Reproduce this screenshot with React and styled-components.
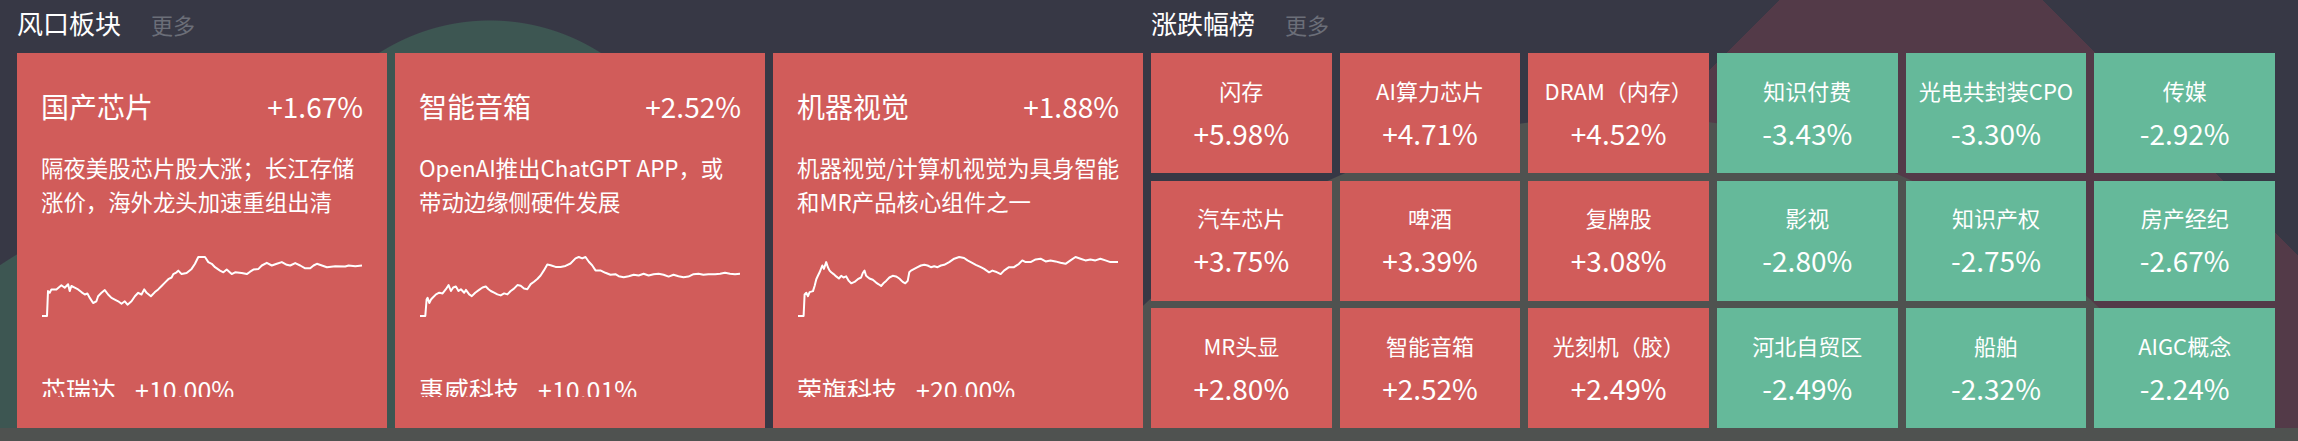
import React from "react";
import styled, { createGlobalStyle } from "styled-components";

const GlobalStyle = createGlobalStyle`
  html, body {
    margin: 0;
    padding: 0;
    background: #373845;
  }
  body {
    font-family: "Noto Sans CJK SC", "Noto Sans", sans-serif;
    color: #fff;
  }
`;

const RED = "#d15c5a";
const GREEN = "#65b99a";

const Page = styled.div`
  box-sizing: border-box;
  width: 2298px;
  height: 441px;
  padding: 0 23px 0 17px;
  display: flex;
  gap: 8px;
  overflow: hidden;
  background:
    linear-gradient(to bottom, transparent 428px, #4f5250 428px),
    radial-gradient(695px circle at 1620px 812px, #4f5250 695px, transparent 696px),
    radial-gradient(205px circle at 490px 226px, #3d5652 205px, transparent 206px),
    radial-gradient(450px circle at 250px 640px, #3d5652 450px, transparent 451px),
    conic-gradient(from 0deg at 1911px -131px, transparent 135deg, #533a48 135deg 225deg, transparent 225deg),
    #373845;
`;

const Section = styled.section`
  flex: 1;
  display: flex;
  flex-direction: column;
`;

const SectionHeader = styled.div`
  box-sizing: border-box;
  height: 53px;
  padding-top: 5px;
  display: flex;
  align-items: baseline;
  gap: 30px;
`;

const SectionTitle = styled.h2`
  margin: 0;
  font-size: 26px;
  line-height: 36px;
  font-weight: 400;
  color: #fff;
`;

const More = styled.span`
  font-size: 22px;
  color: #6b6e78;
`;

const CardGrid = styled.div`
  display: grid;
  grid-template-columns: repeat(3, 1fr);
  gap: 8px;
  height: 375px;
`;

const Card = styled.div`
  background: ${RED};
  padding: 0 24px;
`;

const CardClip = styled.div`
  box-sizing: border-box;
  height: 344px;
  padding-top: 36px;
  overflow: hidden;
  display: flex;
  flex-direction: column;

  & > * {
    flex-shrink: 0;
  }
`;

const CardHead = styled.div`
  display: flex;
  justify-content: space-between;
  font-size: 28px;
  line-height: 34px;
`;

const CardDesc = styled.p`
  margin: 27px -2px 0 0;
  font-size: 22.4px;
  line-height: 34px;
  height: 68px;
`;

const Chart = styled.svg`
  display: block;
  margin-top: 36px;
  width: 322px;
  height: 64px;
`;

const StockRow = styled.div`
  margin-top: 59px;
  display: flex;
  gap: 19px;
  font-size: 25px;
  line-height: 25px;
  white-space: nowrap;
`;

const TileGrid = styled.div`
  display: grid;
  grid-template-columns: repeat(6, 1fr);
  grid-template-rows: repeat(3, 120px);
  column-gap: 8px;
  row-gap: 7.5px;
`;

const Tile = styled.div`
  background: ${(p) => (p.$down ? GREEN : RED)};
  display: flex;
  flex-direction: column;
  align-items: center;
  justify-content: center;
  gap: 7px;
  white-space: nowrap;
`;

const TileName = styled.div`
  font-size: 22px;
  line-height: 32px;
`;

const TileValue = styled.div`
  font-size: 28px;
  line-height: 40px;
`;

// raw points traced from the chart, normalised when drawn
const series = {
  chip: [
    [122, 948], [137, 948], [140, 875], [145, 880], [150, 870], [165, 870], [180, 858], [190, 865],
    [200, 855], [205, 875], [210, 860], [220, 865], [230, 870], [240, 878], [250, 885], [258, 882],
    [265, 895], [275, 910], [285, 905], [290, 890], [300, 880], [310, 872], [320, 885], [330, 895],
    [340, 900], [350, 905], [360, 912], [370, 905], [378, 915], [390, 905], [400, 890], [410, 880],
    [420, 885], [428, 870], [435, 880], [448, 890], [460, 878], [470, 870], [480, 860], [490, 850],
    [500, 840], [510, 835], [515, 825], [525, 820], [530, 815], [540, 825], [555, 822], [570, 810],
    [580, 795], [590, 775], [610, 775], [620, 790], [630, 795], [640, 805], [655, 815], [665, 820],
    [675, 812], [690, 825], [700, 820], [720, 822], [735, 825], [745, 818], [755, 812], [770, 810],
    [780, 800], [795, 792], [810, 800], [825, 795], [840, 790], [855, 798], [865, 800], [880, 793],
    [895, 800], [910, 808], [925, 808], [935, 800], [945, 795], [960, 800], [975, 805], [1000, 802],
    [1030, 803], [1040, 800], [1060, 802], [1080, 800],
  ],
  speaker: [
    [112, 948], [128, 948], [132, 900], [135, 895], [140, 910], [145, 900], [150, 895], [160, 885],
    [170, 880], [180, 882], [190, 870], [198, 858], [205, 875], [212, 865], [220, 862], [228, 875],
    [235, 870], [245, 880], [250, 872], [260, 885], [268, 890], [278, 880], [290, 872], [300, 865],
    [310, 862], [318, 870], [325, 875], [335, 880], [345, 885], [355, 888], [365, 882], [375, 885],
    [385, 875], [395, 868], [405, 858], [415, 860], [425, 868], [435, 870], [445, 855], [455, 848],
    [465, 840], [475, 830], [485, 815], [495, 798], [505, 800], [520, 805], [535, 805], [550, 802],
    [565, 795], [580, 780], [590, 776], [600, 780], [610, 776], [620, 790], [630, 800], [640, 815],
    [655, 815], [670, 822], [685, 828], [700, 826], [710, 832], [725, 835], [740, 832], [755, 828],
    [770, 830], [785, 825], [800, 830], [815, 826], [830, 825], [845, 828], [860, 833], [875, 828],
    [890, 832], [905, 835], [920, 833], [935, 826], [950, 825], [965, 828], [980, 826], [1000, 826],
    [1015, 825], [1030, 822], [1045, 825], [1060, 826], [1075, 825],
  ],
  vision: [
    [105, 948], [122, 948], [125, 885], [130, 880], [135, 890], [140, 878], [150, 875], [155, 860],
    [160, 840], [165, 830], [170, 820], [178, 800], [183, 810], [190, 790], [195, 805], [200, 815],
    [205, 820], [212, 825], [220, 832], [228, 838], [235, 830], [242, 835], [250, 832], [258, 845],
    [265, 852], [275, 848], [285, 840], [295, 835], [300, 822], [305, 815], [310, 830], [320, 838],
    [330, 842], [340, 850], [348, 855], [355, 860], [362, 852], [370, 845], [380, 835], [390, 830],
    [400, 832], [410, 838], [420, 848], [428, 852], [435, 845], [440, 820], [445, 815], [455, 810],
    [465, 805], [475, 800], [485, 798], [495, 800], [505, 805], [515, 802], [525, 805], [535, 800],
    [545, 798], [560, 790], [575, 780], [590, 775], [605, 778], [615, 785], [625, 790], [640, 798],
    [655, 805], [665, 810], [680, 820], [690, 815], [700, 818], [715, 825], [725, 815], [740, 805],
    [755, 805], [770, 795], [780, 785], [790, 790], [805, 790], [820, 782], [835, 780], [850, 788],
    [865, 785], [880, 788], [895, 792], [910, 795], [925, 785], [940, 775], [955, 780], [970, 785],
    [985, 782], [1000, 785], [1015, 780], [1030, 785], [1045, 790], [1068, 790],
  ],
};

const toPoints = (pts) => {
  const xs = pts.map((p) => p[0]);
  const ys = pts.map((p) => p[1]);
  const x0 = Math.min(...xs);
  const x1 = Math.max(...xs);
  const y0 = Math.min(...ys);
  const y1 = Math.max(...ys);
  return pts
    .map(([x, y]) => {
      const px = 1 + ((x - x0) / (x1 - x0)) * 320;
      const py = 3 + ((y - y0) / (y1 - y0)) * 59;
      return `${px.toFixed(1)},${py.toFixed(1)}`;
    })
    .join(" ");
};

const hotCards = [
  {
    name: "国产芯片",
    pct: "+1.67%",
    desc: "隔夜美股芯片股大涨；长江存储涨价，海外龙头加速重组出清",
    line: series.chip,
    stock: "芯瑞达",
    stockPct: "+10.00%",
  },
  {
    name: "智能音箱",
    pct: "+2.52%",
    desc: "OpenAI推出ChatGPT APP，或带动边缘侧硬件发展",
    line: series.speaker,
    stock: "惠威科技",
    stockPct: "+10.01%",
  },
  {
    name: "机器视觉",
    pct: "+1.88%",
    desc: "机器视觉/计算机视觉为具身智能和MR产品核心组件之一",
    line: series.vision,
    stock: "荣旗科技",
    stockPct: "+20.00%",
  },
];

const movers = [
  ["闪存", "+5.98%"], ["AI算力芯片", "+4.71%"], ["DRAM（内存）", "+4.52%"],
  ["知识付费", "-3.43%"], ["光电共封装CPO", "-3.30%"], ["传媒", "-2.92%"],
  ["汽车芯片", "+3.75%"], ["啤酒", "+3.39%"], ["复牌股", "+3.08%"],
  ["影视", "-2.80%"], ["知识产权", "-2.75%"], ["房产经纪", "-2.67%"],
  ["MR头显", "+2.80%"], ["智能音箱", "+2.52%"], ["光刻机（胶）", "+2.49%"],
  ["河北自贸区", "-2.49%"], ["船舶", "-2.32%"], ["AIGC概念", "-2.24%"],
];

const HotCard = ({ card }) => (
  <Card>
    <CardClip>
      <CardHead>
        <span>{card.name}</span>
        <span>{card.pct}</span>
      </CardHead>
      <CardDesc>{card.desc}</CardDesc>
      <Chart viewBox="0 0 322 64">
        <polyline
          points={toPoints(card.line)}
          fill="none"
          stroke="#fff"
          strokeWidth="2"
          strokeLinejoin="round"
        />
      </Chart>
      <StockRow>
        <span>{card.stock}</span>
        <span>{card.stockPct}</span>
      </StockRow>
    </CardClip>
  </Card>
);

const App = () => (
  <>
    <GlobalStyle />
    <Page>
      <Section>
        <SectionHeader>
          <SectionTitle>风口板块</SectionTitle>
          <More>更多</More>
        </SectionHeader>
        <CardGrid>
          {hotCards.map((c) => (
            <HotCard key={c.name} card={c} />
          ))}
        </CardGrid>
      </Section>
      <Section>
        <SectionHeader>
          <SectionTitle>涨跌幅榜</SectionTitle>
          <More>更多</More>
        </SectionHeader>
        <TileGrid>
          {movers.map(([name, pct], i) => (
            <Tile key={i} $down={pct.startsWith("-")}>
              <TileName>{name}</TileName>
              <TileValue>{pct}</TileValue>
            </Tile>
          ))}
        </TileGrid>
      </Section>
    </Page>
  </>
);

export default App;
